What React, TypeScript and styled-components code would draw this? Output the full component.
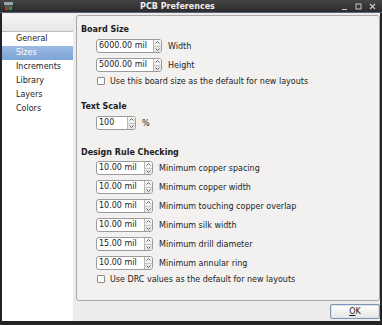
import styled, { createGlobalStyle } from 'styled-components';

const GlobalStyle = createGlobalStyle`
  html, body {
    margin: 0;
    padding: 0;
    background: #2a2a2a;
  }
  * {
    box-sizing: border-box;
  }
`;

const Window = styled.div`
  width: 382px;
  height: 325px;
  display: flex;
  flex-direction: column;
  background: #242424;
  padding: 0 2px 4px 0;
  font-family: 'DejaVu Sans', 'Liberation Sans', sans-serif;
  font-size: 8px;
  color: #1c1c1c;
`;

const TitleBar = styled.div`
  height: 15px;
  display: flex;
  align-items: center;
  padding: 0 0 0 4px;
  background: linear-gradient(to bottom, #444444, #2b2b2b);
  border-bottom: 1px solid #56657a;
  margin-right: -2px;
`;

const AppIcon = styled.svg`
  width: 9px;
  height: 8px;
  flex: none;
`;

const Title = styled.div`
  flex: 1;
  text-align: center;
  color: #f0f0f0;
  font-weight: bold;
  padding-left: 2px;
`;

const Controls = styled.div`
  display: flex;
  align-items: center;
  gap: 5px;
  padding: 0 5px 0 0;
`;

const ControlIcon = styled.svg`
  width: 9px;
  height: 9px;
  flex: none;
`;

const Body = styled.div`
  flex: 1;
  display: flex;
  background: #edeceb;
  margin-left: 2px;
  padding-top: 1px;
`;

const Sidebar = styled.div`
  width: 71px;
  flex: none;
  background: #ffffff;
  display: flex;
  flex-direction: column;
`;

const SidebarHeader = styled.div`
  height: 18px;
  flex: none;
  background: linear-gradient(to bottom, #f6f6f6, #e6e6e5);
  border-bottom: 1px solid #bcbcbc;
`;

const SidebarItem = styled.div<{ $selected?: boolean }>`
  height: 14px;
  line-height: 14px;
  padding-left: 14px;
  color: ${(p) => (p.$selected ? '#ffffff' : '#1c1c1c')};
  background: ${(p) =>
    p.$selected ? 'linear-gradient(to bottom, #9bbbe3, #7ca3d6)' : 'transparent'};
`;

const Main = styled.div`
  flex: 1;
  display: flex;
  flex-direction: column;
  padding: 1px 0 2px 3px;
`;

const Frame = styled.div`
  height: 286px;
  flex: none;
  border: 1px solid #a9a8a6;
  border-radius: 3px;
  background: #f2f1f0;
  padding: 8px 4px 0 4px;
  display: flex;
  flex-direction: column;
`;

const SectionTitle = styled.div<{ $gap?: number }>`
  font-weight: bold;
  line-height: 12px;
  margin-top: ${(p) => p.$gap ?? 0}px;
`;

const Rows = styled.div<{ $top?: number }>`
  display: flex;
  flex-direction: column;
  gap: 5px;
  padding-left: 15px;
  margin-top: ${(p) => p.$top ?? 3}px;
`;

const Row = styled.div`
  display: flex;
  align-items: center;
  gap: 6px;
  height: 14px;
`;

const SpinBox = styled.div<{ $width: number }>`
  width: ${(p) => p.$width}px;
  height: 14px;
  display: flex;
  border: 1px solid #9c9b99;
  border-radius: 3px;
  background: #ffffff;
  overflow: hidden;
`;

const SpinText = styled.div`
  flex: 1;
  line-height: 12px;
  padding-left: 2px;
  color: #1c1c1c;
`;

const SpinButtons = styled.div`
  width: 8px;
  display: flex;
  flex-direction: column;
  border-left: 1px solid #b8b7b5;
  background: linear-gradient(to bottom, #fafafa, #e4e3e1);
`;

const SpinHalf = styled.div`
  flex: 1;
  display: flex;
  align-items: center;
  justify-content: center;
  & + & {
    border-top: 1px solid #c9c8c6;
  }
`;

const Arrow = styled.svg`
  width: 5px;
  height: 3px;
`;

const CheckRow = styled.label`
  display: flex;
  align-items: center;
  gap: 5px;
  height: 12px;
  padding-left: 1px;
  margin-top: -2px;
`;

const CheckBox = styled.span`
  width: 8px;
  height: 8px;
  border: 1px solid #8d8c8a;
  border-radius: 1px;
  background: #ffffff;
  flex: none;
`;

const ButtonRow = styled.div`
  display: flex;
  justify-content: flex-end;
  margin-top: 3px;
`;

const Button = styled.div`
  width: 50px;
  height: 15px;
  line-height: 13px;
  text-align: center;
  border: 1px solid #7f93b3;
  border-radius: 2px;
  background: linear-gradient(to bottom, #ffffff, #e6e5e3);
  box-shadow: inset 0 0 0 1px #d9e2ef;
  & u {
    text-decoration-thickness: 1px;
  }
`;

function Spin({ value, width }: { value: string; width: number }) {
  return (
    <SpinBox $width={width}>
      <SpinText>{value}</SpinText>
      <SpinButtons>
        <SpinHalf>
          <Arrow viewBox="0 0 5 3">
            <path d="M0.5 2.5 L2.5 0.5 L4.5 2.5" fill="none" stroke="#555" strokeWidth="0.9" />
          </Arrow>
        </SpinHalf>
        <SpinHalf>
          <Arrow viewBox="0 0 5 3">
            <path d="M0.5 0.5 L2.5 2.5 L4.5 0.5" fill="none" stroke="#555" strokeWidth="0.9" />
          </Arrow>
        </SpinHalf>
      </SpinButtons>
    </SpinBox>
  );
}

const drcRows = [
  ['10.00 mil', 'Minimum copper spacing'],
  ['10.00 mil', 'Minimum copper width'],
  ['10.00 mil', 'Minimum touching copper overlap'],
  ['10.00 mil', 'Minimum silk width'],
  ['15.00 mil', 'Minimum drill diameter'],
  ['10.00 mil', 'Minimum annular ring'],
];

const pages = ['General', 'Sizes', 'Increments', 'Library', 'Layers', 'Colors'];

export default function App() {
  return (
    <>
      <GlobalStyle />
      <Window>
        <TitleBar>
          <AppIcon viewBox="0 0 9 8">
            <rect x="0" y="0" width="9" height="3" fill="#9aa3a8" />
            <rect x="1" y="3" width="7" height="5" fill="#4d5a4f" />
            <rect x="1" y="5" width="2" height="3" fill="#c0392b" />
            <rect x="6" y="5" width="2" height="3" fill="#3a9a4a" />
          </AppIcon>
          <Title>PCB Preferences</Title>
          <Controls>
            <ControlIcon viewBox="0 0 9 9">
              <rect x="2" y="7" width="5" height="1" fill="#c8c8c8" />
            </ControlIcon>
            <ControlIcon viewBox="0 0 9 9">
              <rect x="2" y="2" width="5" height="5" fill="none" stroke="#c8c8c8" strokeWidth="1" />
            </ControlIcon>
            <ControlIcon viewBox="0 0 9 9">
              <path d="M2 2 L7 7 M7 2 L2 7" stroke="#c8c8c8" strokeWidth="1.2" />
            </ControlIcon>
          </Controls>
        </TitleBar>
        <Body>
          <Sidebar>
            <SidebarHeader />
            {pages.map((p) => (
              <SidebarItem key={p} $selected={p === 'Sizes'}>
                {p}
              </SidebarItem>
            ))}
          </Sidebar>
          <Main>
            <Frame>
              <SectionTitle>Board Size</SectionTitle>
              <Rows>
                <Row>
                  <Spin value="6000.00 mil" width={66} />
                  Width
                </Row>
                <Row>
                  <Spin value="5000.00 mil" width={66} />
                  Height
                </Row>
                <CheckRow>
                  <CheckBox />
                  Use this board size as the default for new layouts
                </CheckRow>
              </Rows>

              <SectionTitle $gap={14}>Text Scale</SectionTitle>
              <Rows>
                <Row>
                  <Spin value="100" width={40} />
                  %
                </Row>
              </Rows>

              <SectionTitle $gap={17}>Design Rule Checking</SectionTitle>
              <Rows $top={2}>
                {drcRows.map(([v, label]) => (
                  <Row key={label}>
                    <Spin value={v} width={57} />
                    {label}
                  </Row>
                ))}
                <CheckRow>
                  <CheckBox />
                  Use DRC values as the default for new layouts
                </CheckRow>
              </Rows>
            </Frame>
            <ButtonRow>
              <Button>
                <u>O</u>K
              </Button>
            </ButtonRow>
          </Main>
        </Body>
      </Window>
    </>
  );
}
